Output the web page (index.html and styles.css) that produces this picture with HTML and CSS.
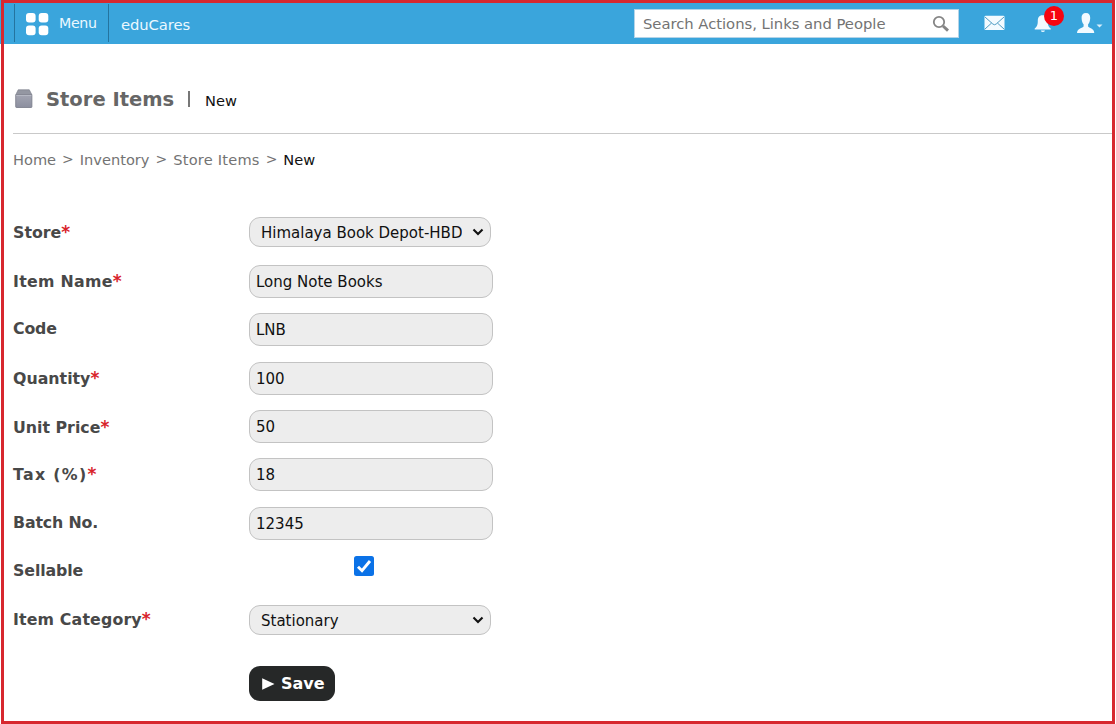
FILE: index.html
```html
<!DOCTYPE html>
<html lang="en">
<head>
<meta charset="utf-8">
<title>Store Items - New</title>
<link rel="stylesheet" href="styles.css">
</head>
<body>
<div class="page">
  <header class="topbar">
    <div class="menu">
      <svg class="grid-icon" width="24" height="24" viewBox="0 0 24 24" fill="#fff"><rect x="1" y="1" width="9.6" height="9.6" rx="3"/><rect x="13.7" y="1" width="9.6" height="9.6" rx="3"/><rect x="1" y="13.6" width="9.6" height="9.6" rx="3"/><rect x="13.7" y="13.6" width="9.6" height="9.6" rx="3"/></svg>
      <span class="menu-text">Menu</span>
    </div>
    <span class="brand">eduCares</span>
    <div class="search">
      <span class="search-text">Search Actions, Links and People</span>
      <svg width="18" height="18" viewBox="0 0 18 18" fill="none" stroke="#858585"><circle cx="7" cy="7" r="5.2" stroke-width="1.8"/><path d="M11 11L16 15.6" stroke-width="3"/></svg>
    </div>
    <svg class="mail" width="21" height="16" viewBox="0 0 21 16"><rect x=".5" y=".7" width="20" height="14.3" rx="1.2" fill="#f4fbff"/><path d="M1 2L8.8 9Q10.5 10.5 12.2 9L20 2M1 14L7.6 8M20 14L13.4 8" fill="none" stroke="#4f9dc4" stroke-width="1"/></svg>
    <div class="bell">
      <svg width="18" height="20" viewBox="0 0 18 20"><path d="M8.7 2.3C4.8 2.3 3.8 5 3.8 8C3.8 12.3 2.8 14 .7 15.5V16.4H16.8V15.5C14.6 14 13.7 12.3 13.7 8C13.7 5 12.5 2.3 8.7 2.3Z" fill="#f2faff"/><path d="M6.8 17.4H11Q10.6 19 8.9 19T6.8 17.4Z" fill="#e9f7ff"/></svg>
      <span class="badge">1</span>
    </div>
    <svg class="user" width="28" height="23" viewBox="0 0 28 23"><path d="M10 1C6.8 1 5.4 3 5.6 6C5.7 9 6.4 11 7.6 12.3V14.5C6.7 16 1.3 16 1 21H18.3C18 16 12.9 16 12.1 14.5V12.3C13.4 11 14.1 9 14.2 6C14.3 3 13.1 1 10 1Z" fill="#f2faff"/><path d="M20.5 12.5H26.5L23.5 15.5Z" fill="#d9effb"/></svg>
  </header>

  <div class="heading">
    <svg class="box-icon" width="18" height="20" viewBox="0 0 18 20"><defs><linearGradient id="g" x2="0" y2="1"><stop stop-color="#a3a5b2"/><stop offset="1" stop-color="#8c8f9f"/></linearGradient></defs><path d="M3.2.8H14.3L17 6H.7Z" fill="#9497a2" stroke="#7f828e" stroke-width=".7"/><rect x=".7" y="5.7" width="16.2" height="12.8" rx=".7" fill="url(#g)" stroke="#777a88" stroke-width=".8"/><path d="M1.2 6.4H16.4" stroke="#b9bbc6"/></svg>
    <h1 class="title">Store Items</h1>
    <span class="divider"></span>
    <span class="subtitle">New</span>
  </div>

  <nav class="crumbs"><span>Home</span><i>&gt;</i><span>Inventory</span><i>&gt;</i><span class="wide">Store Items</span><i>&gt;</i><b>New</b></nav>

  <form class="form">
    <div class="row store"><label>Store<em>*</em></label><div class="select"><span>Himalaya Book Depot-HBD</span><svg width="12" height="8" viewBox="0 0 12 8"><path d="M1.5 1.5L6 6L10.5 1.5" fill="none" stroke="#111" stroke-width="2.1"/></svg></div></div>
    <div class="row name"><label>Item Name<em>*</em></label><div class="input">Long Note Books</div></div>
    <div class="row code"><label>Code</label><div class="input">LNB</div></div>
    <div class="row"><label>Quantity<em>*</em></label><div class="input">100</div></div>
    <div class="row"><label>Unit Price<em>*</em></label><div class="input">50</div></div>
    <div class="row tax"><label>Tax (%)<em>*</em></label><div class="input">18</div></div>
    <div class="row batch"><label>Batch No.</label><div class="input">12345</div></div>
    <div class="row sell"><label>Sellable</label><div class="check"><svg width="20" height="20" viewBox="0 0 20 20"><rect width="20" height="20" rx="2.5" fill="#0b72e7"/><path d="M4 10.7L8 14.7L16 5" fill="none" stroke="#fff" stroke-width="2.9"/></svg></div></div>
    <div class="row category"><label>Item Category<em>*</em></label><div class="select"><span>Stationary</span><svg width="12" height="8" viewBox="0 0 12 8"><path d="M1.5 1.5L6 6L10.5 1.5" fill="none" stroke="#111" stroke-width="2.1"/></svg></div></div>
    <button class="save" type="button"><svg width="13" height="12" viewBox="0 0 13 12"><path d="M.2 .3L12.5 6L.2 11.7Z" fill="#fff"/></svg><span>Save</span></button>
  </form>
  <div class="frame"></div>
</div>
</body>
</html>
```
FILE: styles.css
```css
* { box-sizing: border-box; }
body { margin: 0; background: #fff; font-family: Verdana, "DejaVu Sans", sans-serif; font-size: 15px; color: #111; }
.page { position: relative; width: 1116px; height: 724px; overflow: hidden; }
.frame { position: absolute; inset: 0 1px 0 1px; border: 3px solid #d7282f; pointer-events: none; }
svg { display: block; flex: none; }

.topbar { display: flex; align-items: center; height: 44px; padding: 3px 0 0 14px; margin-right: 2px; background: #3aa5dc; color: #eaf8ff; }
.menu { display: flex; align-items: center; width: 95px; height: 38px; margin-bottom: 2px; padding-left: 10px; border-left: 1px solid #24749f; border-right: 1px solid #24749f; }
.grid-icon { margin-top: 2px; }
.menu-text { margin-left: 10px; font-size: 14.2px; letter-spacing: -0.3px; }
.brand { width: 513px; margin-left: 12px; padding-top: 1px; font-size: 14.8px; letter-spacing: -0.1px; white-space: nowrap; }
.search { display: flex; align-items: center; justify-content: space-between; width: 325px; height: 29px; padding: 0 8px; border: 1px solid #b4d4e8; background: #fff; color: #737373; white-space: nowrap; }
.search-text { font-size: 14.8px; letter-spacing: -0.03px; }
.mail { margin: -1px 0 0 25px; }
.bell { position: relative; margin: -1px 0 0 29px; }
.badge { position: absolute; left: 10px; top: -7px; width: 20px; height: 20px; border-radius: 50%; background: #f60410; color: #fff; font-size: 13px; line-height: 20px; text-align: center; }
.user { margin-left: 24px; }

.heading { display: flex; align-items: center; height: 90px; margin: 0 4px 0 13px; padding: 33px 0 13px 2px; border-bottom: 1px solid #c9c9c9; }
.title { margin: 2px 0 0 13px; width: 128px; font-size: 19.5px; line-height: 24px; color: #666; white-space: nowrap; }
.divider { width: 1.5px; height: 16px; margin-left: 14px; background: #777; }
.subtitle { margin: 3px 0 0 15.5px; font-size: 14.6px; }

.crumbs { display: flex; height: 50px; margin-left: 13px; align-items: center; font-size: 14.6px; color: #737373; white-space: nowrap; }
.crumbs i { width: 23.7px; text-align: center; font-style: normal; font-size: 14px; }
.crumbs .wide { letter-spacing: 0.22px; }
.crumbs b { font-weight: normal; color: #111; }

.form { padding: 24px 0 0 13px; }
.row { display: flex; align-items: center; height: 48.4px; }
.row label { width: 236px; padding-top: 2px; font-size: 15.8px; line-height: 20px; font-weight: bold; color: #484848; white-space: nowrap; }
.row em { color: #d8232b; font-style: normal; font-size: 17px; line-height: 16px; }
.store { height: 47.8px; margin-bottom: 1.4px; }
.name label { letter-spacing: 0.3px; }
.code label { padding: 0 0 1px; letter-spacing: -0.2px; }
.tax label { letter-spacing: 1.3px; padding-top: 1px; }
.tax em { letter-spacing: 0; }
.batch label { padding: 0; letter-spacing: -0.15px; }
.sell label { padding: 0 0 1px; letter-spacing: -0.1px; }
.category label { letter-spacing: 0.15px; padding-top: 1px; }
.input, .select { width: 244px; height: 33px; padding-left: 6px; border: 1px solid #c3c3c3; border-radius: 11px; background: #ededed; line-height: 32px; white-space: nowrap; }
.select { display: flex; align-items: center; justify-content: space-between; width: 242px; height: 30px; padding: 0 6px 0 11px; line-height: 28px; }
.select span { width: 201px; overflow: hidden; padding-top: 2px; }
.check { margin: 0 0 12px 105px; }
.category { height: 47.4px; }
.save { display: flex; align-items: center; width: 86px; height: 35px; margin: 22.8px 0 0 236px; padding: 1px 0 0 13px; border: 0; border-radius: 11px; background: #262828; color: #fff; font: bold 16px "DejaVu Sans", sans-serif; }
.save span { margin: -1px 0 0 6px; }
```
